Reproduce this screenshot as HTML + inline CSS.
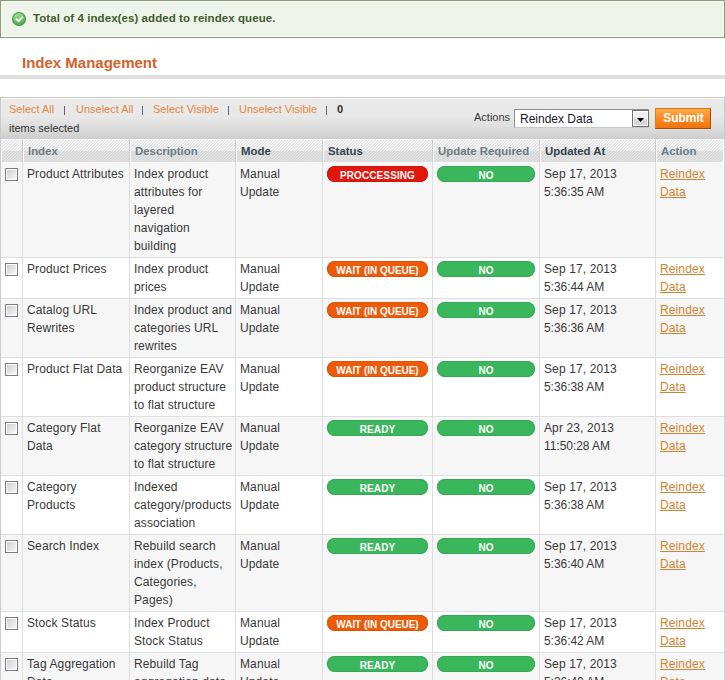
<!DOCTYPE html><html><head><meta charset="utf-8"><style>
*{box-sizing:border-box;margin:0;padding:0}
html,body{width:725px;height:680px;overflow:hidden;background:#fff}
body{position:relative;font-family:"Liberation Sans",sans-serif;font-size:12px;line-height:18px;color:#383838}
.a{position:absolute}
#msg{left:0;top:0;width:725px;height:38px;border:1px solid #8c9882;background:#eff4eb;box-shadow:inset 0 0 0 1px #f6fcee}
#msgtxt{left:33px;top:8px;font-weight:bold;font-size:11.5px;letter-spacing:0.07px;color:#3e5c2c;white-space:nowrap;line-height:20px}
#icon{left:12px;top:12px;width:14px;height:14px}
#title{left:22px;top:53px;font-weight:bold;font-size:15px;color:#d4622a;line-height:20px;white-space:nowrap}
#bar{left:0;top:75px;width:725px;height:4px;background:#dfdfdf}
#mass{left:0;top:97px;width:725px;height:42px;border:1px solid #c8cbcc;border-top-color:#c4c4c4;border-bottom:0;background:linear-gradient(#eaeaea,#e8e8e8 45%,#dcdcdc 75%,#cdcdcd 100%);box-shadow:inset 0 1px 0 #fafafa}
.ml{font-size:11px;color:#e5873e;white-space:nowrap;line-height:18px}
.sep{font-size:11px;color:#4c5a6a;white-space:nowrap;line-height:18px}
#hdr{left:0;top:139px;width:725px;height:24px;border-left:1px solid #c9cbcc;border-right:1px solid #d4d6d7}
.th{position:absolute;top:0;height:24px;border:1px solid #f9f9f9;border-right-color:#c9c9c9}
.th span{position:absolute;left:4px;top:2px;font-weight:bold;font-size:11.4px;line-height:18px;white-space:nowrap}
.srt{color:#35434c}.ns{color:#6c7a82}
.row{position:absolute;left:0;width:725px;border-left:1px solid #c9cbcc;border-right:1px solid #d4d6d7}
.td{position:absolute;top:0;border-right:1px solid #dcdedf;border-bottom:1px solid #dcdedf}
.td .t{position:absolute;left:4px;top:2px;white-space:nowrap;line-height:18px;letter-spacing:0.12px}
.cb{position:absolute;left:4px;top:5px;width:13px;height:13px;border:1px solid #7c7c7c;box-shadow:inset 0 0 0 1px #fff;background:linear-gradient(135deg,#c9c9cf 0%,#e3e3e7 50%,#fbfbfb 100%)}
.cb:after{content:"";position:absolute;left:1px;top:1px;right:1px;bottom:1px}
.badge{position:absolute;left:4px;top:3px;height:16px;border-radius:8px;color:#fff;font-weight:bold;font-size:10px;line-height:20px;letter-spacing:0.1px;text-align:center;white-space:nowrap}
.red{background:#e4160b;box-shadow:inset 0 0 0 1px #c8170e}
.orange{background:#ee5a07;box-shadow:inset 0 0 0 1px #d9540a;letter-spacing:-0.03px}
.green{background:#3ab65c;box-shadow:inset 0 0 0 1px #35a853}
.lnk{color:#d0832f;text-decoration:underline}
#sel{left:514px;top:109px;width:135px;height:19px;border:1px solid #8e8e8e;border-bottom-color:#c9c9c9;border-right-color:#bdbdbd;background:#fff}
#seltxt{left:5px;top:0px;font-size:12px;color:#1a1a2a;line-height:18px;white-space:nowrap}
#selbtn{left:117px;top:0px;width:17px;height:17px;border:1px solid #707070;box-shadow:inset 0 0 0 1px #fff;background:linear-gradient(#f1f1f1 0,#ededed 45%,#dcdcdc 55%,#d2d2d2)}
#tri{left:4px;top:7px;width:7px;height:4px}
#btn{left:655px;top:108px;width:56px;height:21px;border:1px solid;border-color:#dc7412 #9e4e10 #9e4e10 #e47c1a;background:linear-gradient(#fdab4a,#f98b26 50%,#f2720a);color:#fff;font-weight:bold;font-size:12px;line-height:18px;text-align:center;padding-left:1px}
</style></head><body>
<div class="a" id="msg"></div>
<svg class="a" id="icon" viewBox="0 0 14 14"><defs><linearGradient id="g1" x1="0" y1="0" x2="0.3" y2="1"><stop offset="0" stop-color="#aee6a0"/><stop offset="0.55" stop-color="#74c46a"/><stop offset="1" stop-color="#5cb054"/></linearGradient></defs><circle cx="7" cy="7" r="7" fill="#469244"/><circle cx="7" cy="7" r="5.9" fill="url(#g1)"/><path d="M4.4 7.1 L6.5 9.1 L10.3 5.1" fill="none" stroke="#fff" stroke-width="2" stroke-linecap="round" stroke-linejoin="round"/></svg>
<div class="a" id="msgtxt">Total of 4 index(es) added to reindex queue.</div>
<div class="a" id="title">Index Management</div>
<div class="a" id="bar"></div>
<div class="a" id="mass"></div>
<div class="a ml" style="left:9px;top:100px">Select All</div>
<div class="a" style="left:64px;top:106px;width:1px;height:9px;background:#5c6178"></div>
<div class="a ml" style="left:76px;top:100px">Unselect All</div>
<div class="a" style="left:142px;top:106px;width:1px;height:9px;background:#5c6178"></div>
<div class="a ml" style="left:153px;top:100px">Select Visible</div>
<div class="a" style="left:228px;top:106px;width:1px;height:9px;background:#5c6178"></div>
<div class="a ml" style="left:239px;top:100px">Unselect Visible</div>
<div class="a" style="left:326px;top:106px;width:1px;height:9px;background:#5c6178"></div>
<div class="a" style="left:337px;top:100px;font-size:11px;font-weight:bold;color:#2f2f2f;line-height:18px">0</div>
<div class="a" style="left:9px;top:119px;font-size:11px;color:#2f2f2f;line-height:18px">items selected</div>
<div class="a" style="left:474px;top:108px;font-size:11px;color:#3a3a3a;line-height:18px">Actions</div>
<div class="a" id="sel"><div class="a" id="seltxt">Reindex Data</div><div class="a" id="selbtn"><svg class="a" id="tri" viewBox="0 0 7 4"><polygon points="0,0 7,0 3.5,4" fill="#000"/></svg></div></div>
<div class="a" id="btn">Submit</div>
<svg class="a" style="left:0;top:140px" width="725" height="22" shape-rendering="crispEdges"><defs><pattern id="pl" width="3" height="3" patternUnits="userSpaceOnUse"><rect width="3" height="3" fill="#fcfcfc"/><rect x="2" y="0" width="1" height="1" fill="#e0e0e0"/><rect x="1" y="1" width="1" height="1" fill="#e0e0e0"/><rect x="0" y="2" width="1" height="1" fill="#e0e0e0"/><rect x="0" y="0" width="1" height="1" fill="#ededed"/><rect x="2" y="1" width="1" height="1" fill="#ededed"/><rect x="1" y="2" width="1" height="1" fill="#ededed"/></pattern><pattern id="pd" width="3" height="3" patternUnits="userSpaceOnUse"><rect width="3" height="3" fill="#e6e6e6"/><rect x="2" y="0" width="1" height="1" fill="#d5d5d5"/><rect x="1" y="1" width="1" height="1" fill="#d5d5d5"/><rect x="0" y="2" width="1" height="1" fill="#d5d5d5"/><rect x="0" y="0" width="1" height="1" fill="#dcdcdc"/><rect x="2" y="1" width="1" height="1" fill="#dcdcdc"/><rect x="1" y="2" width="1" height="1" fill="#dcdcdc"/></pattern></defs><rect x="0" y="0" width="725" height="11" fill="url(#pl)"/><rect x="0" y="11" width="725" height="11" fill="url(#pd)"/></svg>
<div class="a" id="hdr">
<div class="th" style="left:0px;width:22px"></div>
<div class="th" style="left:22px;width:107px"><span class="ns">Index</span></div>
<div class="th" style="left:129px;width:106px"><span class="ns">Description</span></div>
<div class="th" style="left:235px;width:87px"><span class="srt">Mode</span></div>
<div class="th" style="left:322px;width:110px"><span class="srt">Status</span></div>
<div class="th" style="left:432px;width:107px"><span class="ns">Update Required</span></div>
<div class="th" style="left:539px;width:116px"><span class="srt">Updated At</span></div>
<div class="th" style="left:655px;width:68px;border-right-color:#f9f9f9"><span class="ns">Action</span></div>
</div>
<div class="row" style="top:163px;height:95px;background:#f6f6f6">
<div class="td" style="left:0px;width:22px;height:95px"><div class="cb"></div></div>
<div class="td" style="left:22px;width:107px;height:95px"><div class="t">Product Attributes</div></div>
<div class="td" style="left:129px;width:106px;height:95px"><div class="t">Index product<br>attributes for<br>layered<br>navigation<br>building</div></div>
<div class="td" style="left:235px;width:87px;height:95px"><div class="t">Manual<br>Update</div></div>
<div class="td" style="left:322px;width:110px;height:95px"><div class="badge red" style="width:101px">PROCCESSING</div></div>
<div class="td" style="left:432px;width:107px;height:95px"><div class="badge green" style="width:98px">NO</div></div>
<div class="td" style="left:539px;width:116px;height:95px"><div class="t">Sep 17, 2013<br><span style="letter-spacing:-0.05px">5:36:35 AM</span></div></div>
<div class="td" style="left:655px;width:68px;height:95px;border-right:0"><div class="t"><span class="lnk">Reindex</span><br><span class="lnk">Data</span></div></div>
</div>
<div class="row" style="top:258px;height:41px;background:#ffffff">
<div class="td" style="left:0px;width:22px;height:41px"><div class="cb"></div></div>
<div class="td" style="left:22px;width:107px;height:41px"><div class="t">Product Prices</div></div>
<div class="td" style="left:129px;width:106px;height:41px"><div class="t">Index product<br>prices</div></div>
<div class="td" style="left:235px;width:87px;height:41px"><div class="t">Manual<br>Update</div></div>
<div class="td" style="left:322px;width:110px;height:41px"><div class="badge orange" style="width:101px">WAIT (IN QUEUE)</div></div>
<div class="td" style="left:432px;width:107px;height:41px"><div class="badge green" style="width:98px">NO</div></div>
<div class="td" style="left:539px;width:116px;height:41px"><div class="t">Sep 17, 2013<br><span style="letter-spacing:-0.05px">5:36:44 AM</span></div></div>
<div class="td" style="left:655px;width:68px;height:41px;border-right:0"><div class="t"><span class="lnk">Reindex</span><br><span class="lnk">Data</span></div></div>
</div>
<div class="row" style="top:299px;height:59px;background:#f6f6f6">
<div class="td" style="left:0px;width:22px;height:59px"><div class="cb"></div></div>
<div class="td" style="left:22px;width:107px;height:59px"><div class="t">Catalog URL<br>Rewrites</div></div>
<div class="td" style="left:129px;width:106px;height:59px"><div class="t">Index product and<br>categories URL<br>rewrites</div></div>
<div class="td" style="left:235px;width:87px;height:59px"><div class="t">Manual<br>Update</div></div>
<div class="td" style="left:322px;width:110px;height:59px"><div class="badge orange" style="width:101px">WAIT (IN QUEUE)</div></div>
<div class="td" style="left:432px;width:107px;height:59px"><div class="badge green" style="width:98px">NO</div></div>
<div class="td" style="left:539px;width:116px;height:59px"><div class="t">Sep 17, 2013<br><span style="letter-spacing:-0.05px">5:36:36 AM</span></div></div>
<div class="td" style="left:655px;width:68px;height:59px;border-right:0"><div class="t"><span class="lnk">Reindex</span><br><span class="lnk">Data</span></div></div>
</div>
<div class="row" style="top:358px;height:59px;background:#ffffff">
<div class="td" style="left:0px;width:22px;height:59px"><div class="cb"></div></div>
<div class="td" style="left:22px;width:107px;height:59px"><div class="t">Product Flat Data</div></div>
<div class="td" style="left:129px;width:106px;height:59px"><div class="t">Reorganize EAV<br>product structure<br>to flat structure</div></div>
<div class="td" style="left:235px;width:87px;height:59px"><div class="t">Manual<br>Update</div></div>
<div class="td" style="left:322px;width:110px;height:59px"><div class="badge orange" style="width:101px">WAIT (IN QUEUE)</div></div>
<div class="td" style="left:432px;width:107px;height:59px"><div class="badge green" style="width:98px">NO</div></div>
<div class="td" style="left:539px;width:116px;height:59px"><div class="t">Sep 17, 2013<br><span style="letter-spacing:-0.05px">5:36:38 AM</span></div></div>
<div class="td" style="left:655px;width:68px;height:59px;border-right:0"><div class="t"><span class="lnk">Reindex</span><br><span class="lnk">Data</span></div></div>
</div>
<div class="row" style="top:417px;height:59px;background:#f6f6f6">
<div class="td" style="left:0px;width:22px;height:59px"><div class="cb"></div></div>
<div class="td" style="left:22px;width:107px;height:59px"><div class="t">Category Flat<br>Data</div></div>
<div class="td" style="left:129px;width:106px;height:59px"><div class="t">Reorganize EAV<br>category structure<br>to flat structure</div></div>
<div class="td" style="left:235px;width:87px;height:59px"><div class="t">Manual<br>Update</div></div>
<div class="td" style="left:322px;width:110px;height:59px"><div class="badge green" style="width:101px">READY</div></div>
<div class="td" style="left:432px;width:107px;height:59px"><div class="badge green" style="width:98px">NO</div></div>
<div class="td" style="left:539px;width:116px;height:59px"><div class="t">Apr 23, 2013<br><span style="letter-spacing:-0.05px">11:50:28 AM</span></div></div>
<div class="td" style="left:655px;width:68px;height:59px;border-right:0"><div class="t"><span class="lnk">Reindex</span><br><span class="lnk">Data</span></div></div>
</div>
<div class="row" style="top:476px;height:59px;background:#ffffff">
<div class="td" style="left:0px;width:22px;height:59px"><div class="cb"></div></div>
<div class="td" style="left:22px;width:107px;height:59px"><div class="t">Category<br>Products</div></div>
<div class="td" style="left:129px;width:106px;height:59px"><div class="t">Indexed<br>category/products<br>association</div></div>
<div class="td" style="left:235px;width:87px;height:59px"><div class="t">Manual<br>Update</div></div>
<div class="td" style="left:322px;width:110px;height:59px"><div class="badge green" style="width:101px">READY</div></div>
<div class="td" style="left:432px;width:107px;height:59px"><div class="badge green" style="width:98px">NO</div></div>
<div class="td" style="left:539px;width:116px;height:59px"><div class="t">Sep 17, 2013<br><span style="letter-spacing:-0.05px">5:36:38 AM</span></div></div>
<div class="td" style="left:655px;width:68px;height:59px;border-right:0"><div class="t"><span class="lnk">Reindex</span><br><span class="lnk">Data</span></div></div>
</div>
<div class="row" style="top:535px;height:77px;background:#f6f6f6">
<div class="td" style="left:0px;width:22px;height:77px"><div class="cb"></div></div>
<div class="td" style="left:22px;width:107px;height:77px"><div class="t">Search Index</div></div>
<div class="td" style="left:129px;width:106px;height:77px"><div class="t">Rebuild search<br>index (Products,<br>Categories,<br>Pages)</div></div>
<div class="td" style="left:235px;width:87px;height:77px"><div class="t">Manual<br>Update</div></div>
<div class="td" style="left:322px;width:110px;height:77px"><div class="badge green" style="width:101px">READY</div></div>
<div class="td" style="left:432px;width:107px;height:77px"><div class="badge green" style="width:98px">NO</div></div>
<div class="td" style="left:539px;width:116px;height:77px"><div class="t">Sep 17, 2013<br><span style="letter-spacing:-0.05px">5:36:40 AM</span></div></div>
<div class="td" style="left:655px;width:68px;height:77px;border-right:0"><div class="t"><span class="lnk">Reindex</span><br><span class="lnk">Data</span></div></div>
</div>
<div class="row" style="top:612px;height:41px;background:#ffffff">
<div class="td" style="left:0px;width:22px;height:41px"><div class="cb"></div></div>
<div class="td" style="left:22px;width:107px;height:41px"><div class="t">Stock Status</div></div>
<div class="td" style="left:129px;width:106px;height:41px"><div class="t">Index Product<br>Stock Status</div></div>
<div class="td" style="left:235px;width:87px;height:41px"><div class="t">Manual<br>Update</div></div>
<div class="td" style="left:322px;width:110px;height:41px"><div class="badge orange" style="width:101px">WAIT (IN QUEUE)</div></div>
<div class="td" style="left:432px;width:107px;height:41px"><div class="badge green" style="width:98px">NO</div></div>
<div class="td" style="left:539px;width:116px;height:41px"><div class="t">Sep 17, 2013<br><span style="letter-spacing:-0.05px">5:36:42 AM</span></div></div>
<div class="td" style="left:655px;width:68px;height:41px;border-right:0"><div class="t"><span class="lnk">Reindex</span><br><span class="lnk">Data</span></div></div>
</div>
<div class="row" style="top:653px;height:41px;background:#f6f6f6">
<div class="td" style="left:0px;width:22px;height:41px"><div class="cb"></div></div>
<div class="td" style="left:22px;width:107px;height:41px"><div class="t">Tag Aggregation<br>Data</div></div>
<div class="td" style="left:129px;width:106px;height:41px"><div class="t">Rebuild Tag<br>aggregation data</div></div>
<div class="td" style="left:235px;width:87px;height:41px"><div class="t">Manual<br>Update</div></div>
<div class="td" style="left:322px;width:110px;height:41px"><div class="badge green" style="width:101px">READY</div></div>
<div class="td" style="left:432px;width:107px;height:41px"><div class="badge green" style="width:98px">NO</div></div>
<div class="td" style="left:539px;width:116px;height:41px"><div class="t">Sep 17, 2013<br><span style="letter-spacing:-0.05px">5:36:40 AM</span></div></div>
<div class="td" style="left:655px;width:68px;height:41px;border-right:0"><div class="t"><span class="lnk">Reindex</span><br><span class="lnk">Data</span></div></div>
</div>
</body></html>
